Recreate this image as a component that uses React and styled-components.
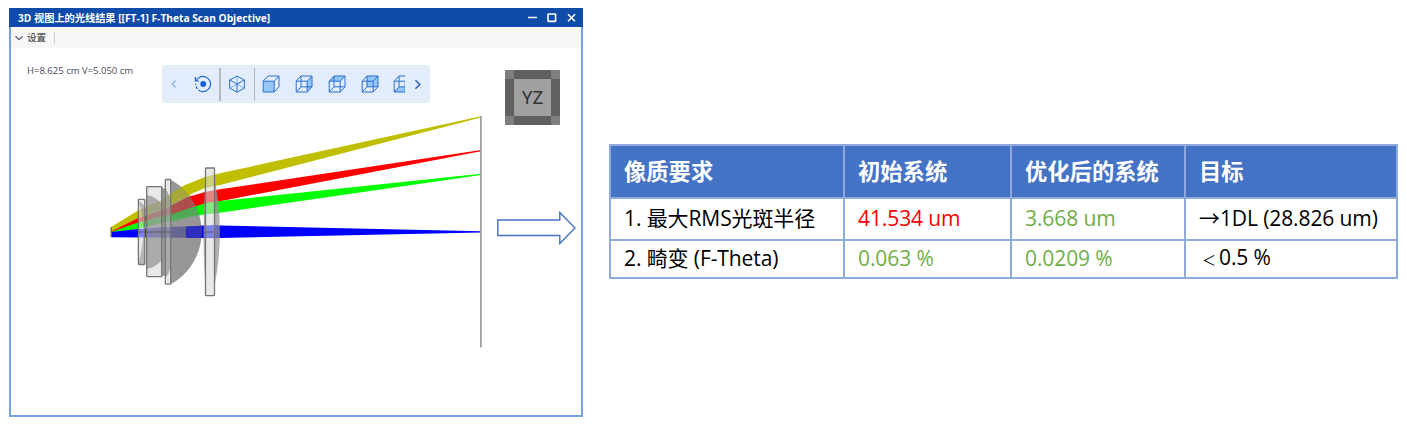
import React from 'react';
import styled, { createGlobalStyle } from 'styled-components';

const GlobalStyle = createGlobalStyle`
  * {
    box-sizing: border-box;
  }

  body {
    margin: 0;
    background: #fff;
    font-family: 'Open Sans', 'Noto Sans CJK SC', sans-serif;
  }
`;

const rows = [
  {
    name: '1. 最大RMS光斑半径',
    initial: { text: '41.534 um', color: '#ff0000' },
    optimized: { text: '3.668 um', color: '#70ad47' },
    target: '→1DL (28.826 um)',
  },
  {
    name: '2. 畸变 (F-Theta)',
    initial: { text: '0.063 %', color: '#70ad47' },
    optimized: { text: '0.0209 %', color: '#70ad47' },
    prefix: '＜',
    target: '0.5 %',
  },
];

const faces = {
  front: 'M1.2 6.2H12.2V17H1.2Z',
  right: 'M12.2 6.2L17 1V11.8L12.2 17Z',
  top: 'M1.2 6.2L6 1H17L12.2 6.2Z',
  back: 'M6 1H17V11.8H6Z',
  bottom: 'M1.2 17L6 11.8H17L12.2 17Z',
};

function CubeIcon({ face }) {
  return (
    <svg width="18" height="18" viewBox="0 0 18 18" fill="none">
      <path d={faces[face]} fill="#93c8f6" />
      <g stroke="#2b6fd0" strokeWidth="1" strokeLinejoin="round">
        {face !== 'front' && <path d="M6 1V11.8H17M6 11.8L1.2 17" />}
        <path d="M1.2 6.2H12.2V17H1.2ZM1.2 6.2L6 1H17L12.2 6.2M17 1V11.8L12.2 17" />
      </g>
    </svg>
  );
}

function RotateIcon() {
  return (
    <svg width="18" height="18" viewBox="0 0 18 18" fill="none">
      <path
        d="M2 5.9A7.6 7.6 0 1 1 6.8 16.3M1.4 2V6H4.8"
        stroke="#1f69d2"
        strokeWidth="1.2"
      />
      <path
        d="M6.8 16.3A7.6 7.6 0 0 1 1.6 9"
        stroke="#1f69d2"
        strokeWidth="1.2"
        strokeDasharray="2.6 1.6"
      />
      <circle cx="9.2" cy="9" r="2.9" fill="#1261d0" />
    </svg>
  );
}

function IsoIcon() {
  return (
    <svg width="18" height="18" viewBox="0 0 18 18" fill="none">
      <path d="M9 1V9M9 9L1.6 13.2M9 9L16.4 13.2" stroke="#78aeea" />
      <path
        d="M9 1L16.4 5V13.2L9 17.2L1.6 13.2V5ZM1.6 5L9 9L16.4 5M9 9V17.2"
        stroke="#2b6fd0"
        strokeLinejoin="round"
      />
    </svg>
  );
}

function Chevron({ d, color, size = 8 }) {
  return (
    <svg width={size} height={size} viewBox="0 0 8 8" fill="none">
      <path d={d} stroke={color} strokeWidth="1.3" />
    </svg>
  );
}

const mounts = [
  { x: 138.4, y: 199.3, width: 6.4, height: 65.2 },
  { x: 146.7, y: 186.6, width: 15, height: 90 },
  { x: 165.3, y: 179.5, width: 5.4, height: 104.7 },
  { x: 205.5, y: 168, width: 9, height: 127.7 },
];

function Scene() {
  return (
    <SceneSvg viewBox="11 48 570 367">
      <defs>
        <linearGradient id="dome" x1="0" y1="0" x2="1" y2="0">
          <stop offset="0" stopColor="#8a8a8a" stopOpacity="0.88" />
          <stop offset="0.5" stopColor="#848484" stopOpacity="0.85" />
          <stop offset="1" stopColor="#8a8a8a" stopOpacity="0.9" />
        </linearGradient>
      </defs>

      {/* ray bundles */}
      <path
        fill="#bfbf00"
        d="M111 227L138 210.5L162 200L175 190L185 185L205 177L220 173.3L481 116.3V117.4L220 185L205 188L185 196.5L165 208L138 218L111 232Z"
      />
      <path
        fill="#f00"
        d="M111 231.5L138 218L165 209L185 198L195 195L205 192L220 189.3L481 150V151.2L220 201.2L205 203.5L178 213L138 223L111 232.5Z"
      />
      <path
        fill="#0f0"
        d="M111 232L138 222.5L178 212L205 203.2L220 201L481 173.8V175L220 212.7L205 214.5L185 217L162 223L138 229L111 233Z"
      />
      <path
        fill="#00f"
        d="M111 232L138 229L162 227.3L215 225L220 225.5L481 231.2V232.4L220 238L215 238.3L205 238L111 237.3Z"
      />
      <path d="M111.2 227V237" stroke="#6e6e30" strokeWidth="1.4" />
      <path d="M480.9 116V347.5" stroke="#969696" strokeWidth="1.6" />

      <g fill="#d6dad6" fillOpacity="0.6">
        {mounts.map((mount) => (
          <rect key={mount.x} {...mount} />
        ))}
      </g>

      {/* lens bodies */}
      <path fill="#8c8c8c" fillOpacity="0.55" d="M138.5 263Q143 247 143.5 232Q143 216 138.5 201L145 206V264.5H138.5Z" />
      <path fill="#858585" fillOpacity="0.62" d="M147 195Q156 197 161.7 204V260Q156 267 147 269Z" />
      <path fill="#8a8a8a" fillOpacity="0.85" d="M161.7 187L165 189V275L161.7 277Z" />
      <path fill="#8a8a8a" fillOpacity="0.65" d="M165 188Q170 194 171 205V262Q170 274 165 278Z" />
      <path fill="url(#dome)" d="M171 180C190 190 201.7 211 201.7 232C201.7 253 190 274 171 284Z" />
      <g fillOpacity="0.32">
        <path fill="#bfbf00" fillOpacity="0.5" d="M171 193L182 187L191.5 195L171 205Z" />
        <path fill="#e00000" d="M171 206L191 195.5L197 205.5L171 215Z" />
        <path fill="#00d818" d="M171 214L197 205.5L200.8 215L171 222Z" />
      </g>
      <path fill="#505090" fillOpacity="0.4" d="M171 226.8H186V237.5H171Z" />
      <path fill="#0000d8" fillOpacity="0.62" d="M186 226.5L201.5 225.8V238H186Z" />
      <path fill="#949494" fillOpacity="0.75" d="M205.3 180Q201.7 232 205.3 284ZM214.3 177Q225.5 232 214.3 287Z" />

      <g fill="none" stroke="#757575" strokeWidth="1.3">
        {mounts.map((mount) => (
          <rect key={mount.x} {...mount} rx="0.8" />
        ))}
      </g>
      <path d="M138 232H172M205 232H214" stroke="#505050" strokeOpacity="0.75" strokeWidth="1.2" />

      <path
        d="M497.8 220H559.8V212.5L575 228L559.8 243.5V235.5H497.8Z"
        fill="#fff"
        stroke="#4472c4"
        strokeWidth="1.4"
      />
    </SceneSvg>
  );
}

function ViewerWindow() {
  return (
    <Window>
      <TitleBar>
        <Title>3D 视图上的光线结果 [[FT-1] F-Theta Scan Objective]</Title>
        <svg width="50" height="12" viewBox="0 0 50 12" fill="none" stroke="#fff" strokeWidth="1.6">
          <path d="M1 5.5H10M41 2.2L48 9.2M48 2.2L41 9.2" />
          <rect x="21" y="2" width="7.6" height="7.4" rx="0.6" />
        </svg>
      </TitleBar>
      <SettingsBar>
        <Chevron d="M0.5 2.2L4 5.7L7.5 2.2" color="#6a5a82" />
        <span>设置</span>
      </SettingsBar>
      <Viewport>
        <Scene />
        <Readout>H=8.625 cm V=5.050 cm</Readout>
        <ViewTools>
          <Tool $width={24}>
            <Chevron d="M5.6 0.5L2.2 4L5.6 7.5" color="#86b6ec" />
          </Tool>
          <Tool $width={33}>
            <RotateIcon />
          </Tool>
          <Divider />
          <Tool $width={33}>
            <IsoIcon />
          </Tool>
          <Divider />
          <Tool><CubeIcon face="front" /></Tool>
          <Tool><CubeIcon face="right" /></Tool>
          <Tool><CubeIcon face="top" /></Tool>
          <Tool><CubeIcon face="back" /></Tool>
          <ClippedTool><CubeIcon face="bottom" /></ClippedTool>
          <Tool $width={24}>
            <Chevron d="M2.2 0.3L6 4L2.2 7.7" color="#2559b5" size={9} />
          </Tool>
        </ViewTools>
        <ViewCube>
          <i /><b /><i />
          <b /><Face>YZ</Face><b />
          <i /><b /><i />
        </ViewCube>
      </Viewport>
    </Window>
  );
}

function App() {
  return (
    <Page>
      <GlobalStyle />
      <ViewerWindow />
      <Table>
        <colgroup>
          <col width="234" />
          <col width="167" />
          <col width="174" />
          <col width="212" />
        </colgroup>
        <thead>
          <tr>
            <th>像质要求</th>
            <th>初始系统</th>
            <th>优化后的系统</th>
            <th>目标</th>
          </tr>
        </thead>
        <tbody>
          {rows.map((row) => (
            <tr key={row.name}>
              <td>{row.name}</td>
              <Value $color={row.initial.color}>{row.initial.text}</Value>
              <Value $color={row.optimized.color}>{row.optimized.text}</Value>
              <td>
                {row.prefix && <Prefix>{row.prefix}</Prefix>}
                {row.target}
              </td>
            </tr>
          ))}
        </tbody>
      </Table>
    </Page>
  );
}

const Page = styled.main`
  display: flex;
  align-items: flex-start;
  gap: 26px;
  width: 1407px;
  height: 425px;
  padding: 8px 9px;
  overflow: hidden;
`;

const Window = styled.section`
  display: flex;
  flex-direction: column;
  flex: none;
  width: 574px;
  height: 409px;
  border: solid #77a3e0;
  border-width: 0 2px 2px;
`;

const TitleBar = styled.header`
  display: flex;
  align-items: center;
  justify-content: space-between;
  flex: none;
  height: 19px;
  margin: 0 -2px;
  padding: 0 6px 0 9px;
  background: #0f4ca9;
`;

const Title = styled.h1`
  margin: 0;
  color: #fff;
  font-size: 10.2px;
  font-weight: 700;
  line-height: 20px;
  white-space: nowrap;
`;

const SettingsBar = styled.div`
  display: flex;
  align-items: center;
  flex: none;
  gap: 4px;
  height: 21px;
  padding-left: 4px;
  background: #f7f7f7;
  color: #333;
  font-size: 9.5px;

  span {
    height: 12px;
    padding-right: 8px;
    border-right: 1px solid #ccc;
    line-height: 11px;
  }
`;

const Viewport = styled.div`
  position: relative;
  display: flex;
  align-items: flex-start;
  flex: 1;
  padding: 17px 0 0 16px;
`;

const SceneSvg = styled.svg`
  position: absolute;
  inset: 0;
  width: 570px;
  height: 367px;
`;

const Readout = styled.span`
  width: 135px;
  color: #4c4c58;
  font-size: 9.5px;
  line-height: 12px;
  white-space: nowrap;
`;

const ViewTools = styled.div`
  position: relative;
  display: flex;
  align-items: center;
  width: 268px;
  height: 38px;
  border-radius: 3px;
  background: #e2ecfb;
`;

const Tool = styled.span`
  display: flex;
  align-items: center;
  justify-content: center;
  flex: none;
  width: ${({ $width }) => $width || 32.8}px;

  svg {
    flex: none;
  }
`;

const ClippedTool = styled(Tool)`
  justify-content: flex-start;
  width: 12px;
  margin: 0 0 0 7px;
  overflow: hidden;
`;

const Divider = styled.span`
  flex: none;
  width: 1.5px;
  height: 33px;
  background: #b5b8bb;
`;

const ViewCube = styled.div`
  display: grid;
  grid-template: 9px 37px 9px / 9px 37px 9px;
  margin: 5px 0 0 75px;

  i {
    background: #7f7f7f;
  }

  b {
    background: #606060;
  }
`;

const Face = styled.span`
  background: #a0a0a0;
  color: #333;
  font-family: Roboto, sans-serif;
  font-size: 18px;
  line-height: 38px;
  text-align: center;
`;

const Table = styled.table`
  flex: none;
  width: 788px;
  margin-top: 136px;
  border-collapse: collapse;
  table-layout: fixed;
  color: #000;
  font-size: 21px;
  letter-spacing: -0.1px;
  white-space: nowrap;

  th,
  td {
    padding: 0 0 2px 13px;
    border: 2px solid #8faadc;
    line-height: 30px;
    text-align: left;
  }

  th {
    height: 53px;
    padding-bottom: 0;
    background: #4472c4;
    color: #fff;
    font-size: 22.3px;
    font-weight: 700;
    letter-spacing: 0;
  }

  td {
    height: 42px;
  }

  tbody tr:last-child td {
    height: 38px;
  }
`;

const Value = styled.td`
  color: ${({ $color }) => $color};
`;

const Prefix = styled.span`
  display: inline-block;
  width: 20px;
  font-size: 14px;
  text-align: center;
`;

export default App;
